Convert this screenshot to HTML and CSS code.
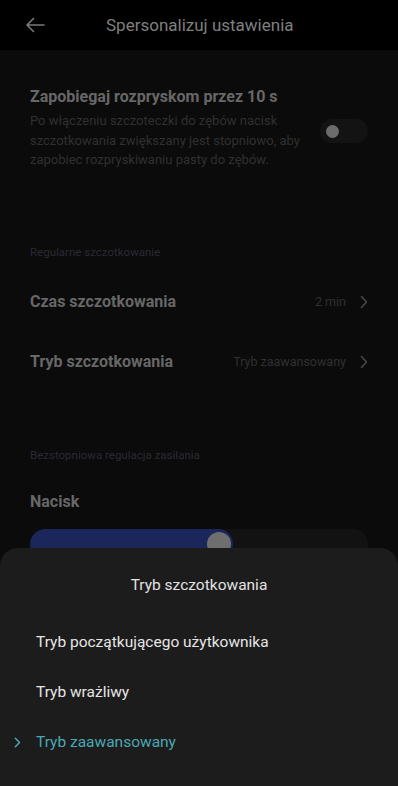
FILE: index.html
```html
<!DOCTYPE html>
<html lang="pl">
<head>
<meta charset="utf-8">
<link rel="stylesheet" href="styles.css">
</head>
<body>
<div class="screen">
  <header class="topbar">
    <svg class="back" width="20" height="16" viewBox="0 0 20 16"><path d="M19 8H2M8.5 1.5L2 8l6.5 6.5" fill="none" stroke="#7a7a7a" stroke-width="1.6" stroke-linecap="round" stroke-linejoin="round"/></svg>
    <h1 class="title">Spersonalizuj ustawienia</h1>
  </header>
  <main class="content">
    <section class="splash">
      <div class="splash-text">
        <h2 class="heading">Zapobiegaj rozpryskom przez 10 s</h2>
        <p class="desc">Po włączeniu szczoteczki do zębów nacisk szczotkowania zwiększany jest stopniowo, aby zapobiec rozpryskiwaniu pasty do zębów.</p>
      </div>
      <div class="toggle"><span class="knob"></span></div>
    </section>
    <div class="label label-first">Regularne szczotkowanie</div>
    <div class="row">
      <span class="heading">Czas szczotkowania</span>
      <span class="value">2 min <svg class="chev" width="8" height="14" viewBox="0 0 8 14"><path d="M1.5 1.5L6.5 7l-5 5.5" fill="none" stroke="#4a4a4a" stroke-width="1.5" stroke-linecap="round" stroke-linejoin="round"/></svg></span>
    </div>
    <div class="row">
      <span class="heading">Tryb szczotkowania</span>
      <span class="value">Tryb zaawansowany <svg class="chev" width="8" height="14" viewBox="0 0 8 14"><path d="M1.5 1.5L6.5 7l-5 5.5" fill="none" stroke="#4a4a4a" stroke-width="1.5" stroke-linecap="round" stroke-linejoin="round"/></svg></span>
    </div>
    <div class="label label-second">Bezstopniowa regulacja zasilania</div>
    <div class="heading pressure">Nacisk</div>
    <div class="slider">
      <div class="fill" style="width:60%"><span class="thumb"></span></div>
    </div>
  </main>
  <div class="sheet">
    <div class="sheet-title">Tryb szczotkowania</div>
    <ul class="options">
      <li class="option">Tryb początkującego użytkownika</li>
      <li class="option">Tryb wrażliwy</li>
      <li class="option selected"><svg class="sel-chev" width="7" height="11" viewBox="0 0 7 11"><path d="M1.3 1.3L5.5 5.5 1.3 9.7" fill="none" stroke="#4aa9b4" stroke-width="1.5" stroke-linecap="round" stroke-linejoin="round"/></svg>Tryb zaawansowany</li>
    </ul>
  </div>
</div>
</body>
</html>
```
FILE: styles.css
```css
* { box-sizing: border-box; margin: 0; padding: 0; }
html, body { width: 398px; height: 786px; overflow: hidden; background: #0b0b0b; }
body { font-family: "Roboto", "Noto Sans", sans-serif; }
.screen { position: relative; width: 398px; height: 786px; background: #0b0b0b; overflow: hidden; }
.topbar { height: 50px; background: #000; display: flex; align-items: center; padding-left: 25px; }
.back { flex: none; }
.title { font-size: 17px; font-weight: 400; color: #7f7f7f; margin-left: 61px; }
.content { padding: 0 30px; }
.splash { display: flex; align-items: center; padding-top: 37px; }
.splash-text { flex: 1; }
.heading { font-size: 16px; font-weight: 700; color: #676767; }
.desc { font-size: 13px; line-height: 19.5px; color: #303030; margin-top: 5px; width: 270px; }
.toggle { flex: none; width: 48px; height: 24px; border-radius: 12px; background: #131313; margin-top: 6px; display: flex; align-items: center; padding-left: 6px; }
.knob { width: 13px; height: 13px; border-radius: 50%; background: #6c6c6c; }
.label { font-size: 11.5px; color: #2a2a33; }
.label-first { margin-top: 75px; }
.label-second { margin-top: 56px; }
.row { display: flex; justify-content: space-between; align-items: center; height: 60px; }
.label-first + .row { margin-top: 13px; }
.value { font-size: 12.5px; color: #303030; display: flex; align-items: center; gap: 14px; }
.chev { flex: none; }
.pressure { margin-top: 30px; }
.slider { margin-top: 18px; height: 30px; border-radius: 15px; background: #121212; overflow: hidden; }
.fill { height: 100%; background: #1b275a; border-radius: 15px; position: relative; }
.thumb { position: absolute; right: 2px; top: 3px; width: 24px; height: 24px; border-radius: 50%; background: #6e6e6e; }
.sheet { position: absolute; left: 0; right: 0; top: 548px; bottom: 0; background: #1c1c1c; border-radius: 18px 18px 0 0; }
.sheet-title { text-align: center; font-size: 15.5px; color: #e2e2e2; margin-top: 28px; }
.options { list-style: none; margin-top: 23px; }
.option { position: relative; font-size: 15.5px; color: #e6e6e6; padding-left: 36px; height: 50px; display: flex; align-items: center; }
.option.selected { color: #4aa9b4; }
.sel-chev { position: absolute; left: 14px; top: 20px; }
```
